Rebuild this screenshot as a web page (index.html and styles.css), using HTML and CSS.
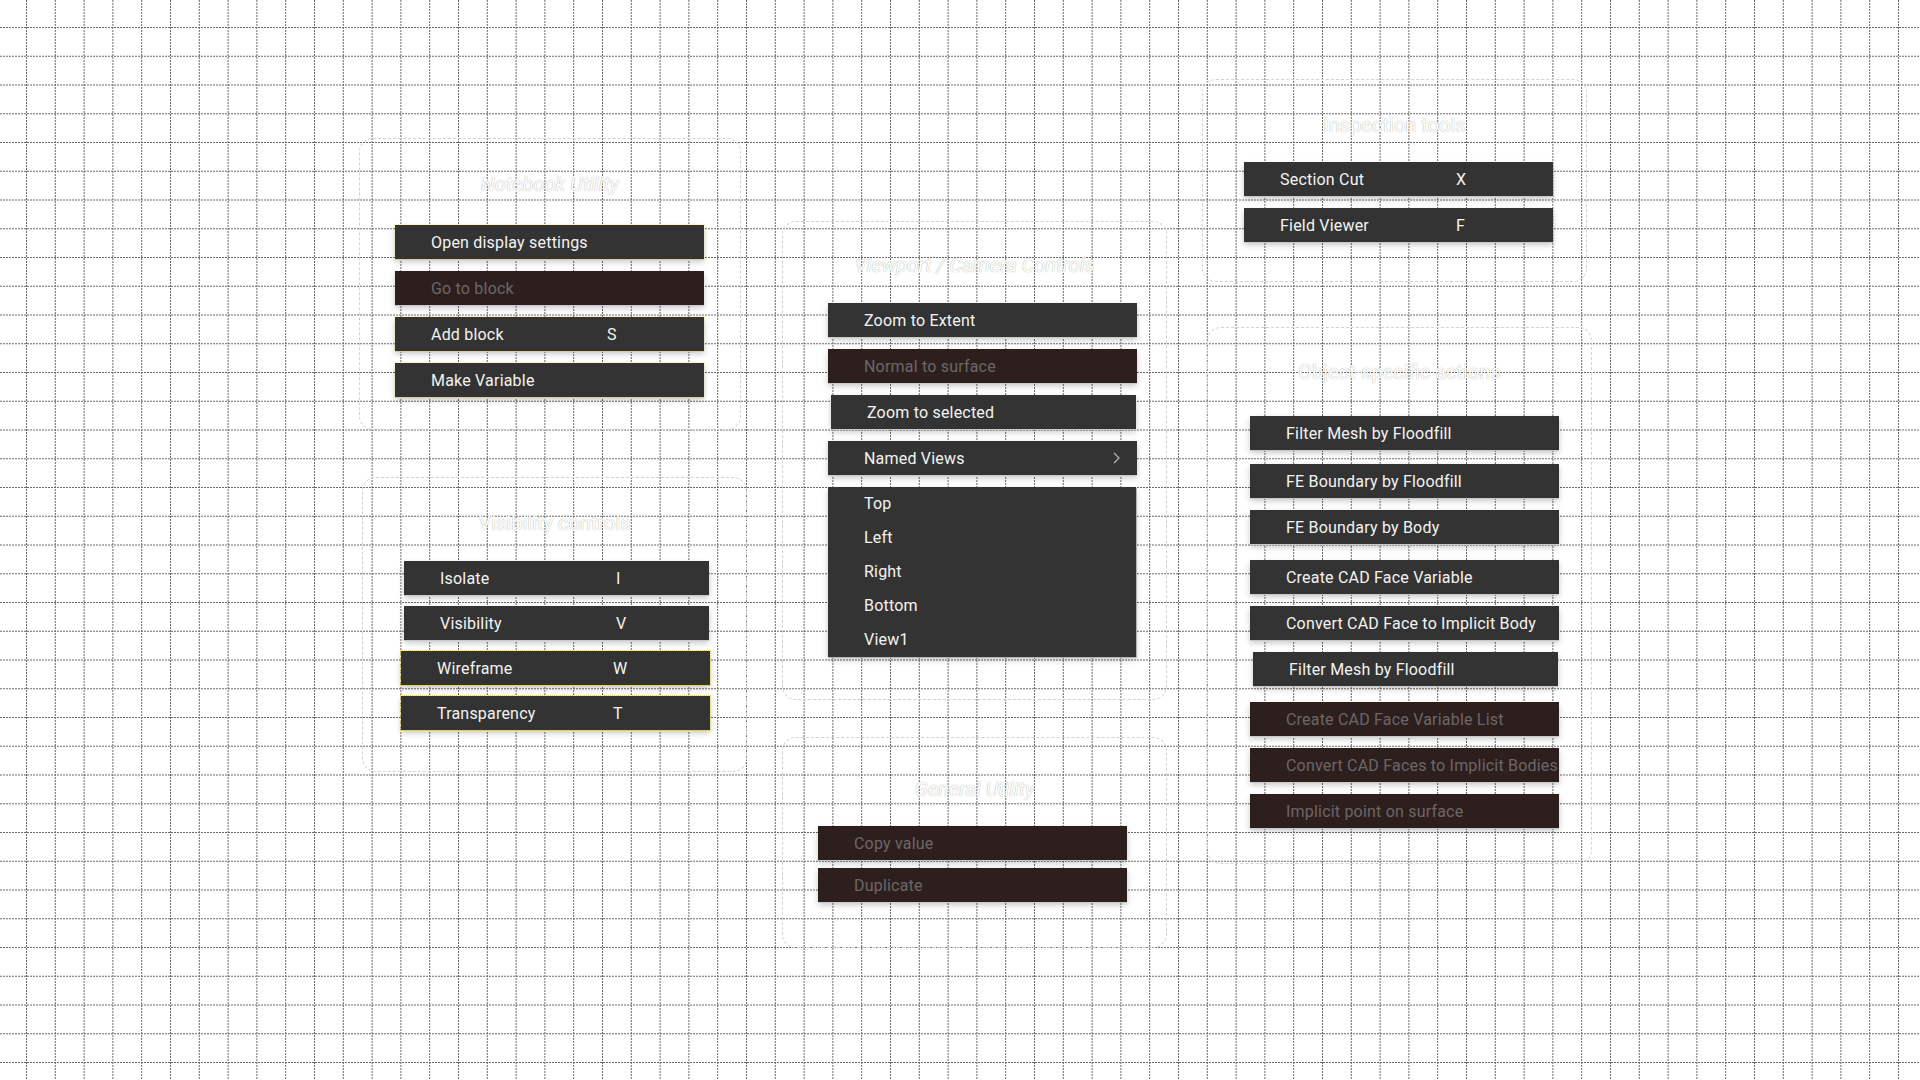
FILE: index.html
```html
<!DOCTYPE html>
<html lang="en">
<head>
    <meta charset="UTF-8">
    <meta name="viewport" content="width=device-width, initial-scale=1.0">
    <title>Context Menus</title>
    <link rel="stylesheet" href="styles.css">
</head>
<body>
    <div class="canvas">
        <!-- board grid -->
        <svg class="grid" width="1920" height="1080" viewBox="0 0 1920 1080">
            <path class="grid-lines" d="M26.5 0V1080M55.3 0V1080M84.1 0V1080M112.9 0V1080M141.7 0V1080M170.5 0V1080M199.3 0V1080M228.1 0V1080M256.9 0V1080M285.7 0V1080M314.5 0V1080M343.3 0V1080M372.1 0V1080M400.9 0V1080M429.7 0V1080M458.5 0V1080M487.3 0V1080M516.1 0V1080M544.9 0V1080M573.7 0V1080M602.5 0V1080M631.3 0V1080M660.1 0V1080M688.9 0V1080M717.7 0V1080M746.5 0V1080M775.3 0V1080M804.1 0V1080M832.9 0V1080M861.7 0V1080M890.5 0V1080M919.3 0V1080M948.1 0V1080M976.9 0V1080M1005.7 0V1080M1034.5 0V1080M1063.3 0V1080M1092.1 0V1080M1120.9 0V1080M1149.7 0V1080M1178.5 0V1080M1207.3 0V1080M1236.1 0V1080M1264.9 0V1080M1293.7 0V1080M1322.5 0V1080M1351.3 0V1080M1380.1 0V1080M1408.9 0V1080M1437.7 0V1080M1466.5 0V1080M1495.3 0V1080M1524.1 0V1080M1552.9 0V1080M1581.7 0V1080M1610.5 0V1080M1639.3 0V1080M1668.1 0V1080M1696.9 0V1080M1725.7 0V1080M1754.5 0V1080M1783.3 0V1080M1812.1 0V1080M1840.9 0V1080M1869.7 0V1080M1898.5 0V1080"/>
            <path class="grid-lines" d="M0 27.5H1920M0 56.25H1920M0 85H1920M0 113.75H1920M0 142.5H1920M0 171.25H1920M0 200H1920M0 228.75H1920M0 257.5H1920M0 286.25H1920M0 315H1920M0 343.75H1920M0 372.5H1920M0 401.25H1920M0 430H1920M0 458.75H1920M0 487.5H1920M0 516.25H1920M0 545H1920M0 573.75H1920M0 602.5H1920M0 631.25H1920M0 660H1920M0 688.75H1920M0 717.5H1920M0 746.25H1920M0 775H1920M0 803.75H1920M0 832.5H1920M0 861.25H1920M0 890H1920M0 918.75H1920M0 947.5H1920M0 976.25H1920M0 1005H1920M0 1033.75H1920M0 1062.5H1920"/>
        </svg>

        <!-- Notebook -->
        <section class="group notebook">
            <h2 class="group-title slanted">Notebook Utility</h2>
            <ul class="menu">
                <li class="item marked">Open display settings</li>
                <li class="item disabled">Go to block</li>
                <li class="item marked"><span class="label">Add block</span><span class="key">S</span></li>
                <li class="item marked">Make Variable</li>
            </ul>
        </section>

        <!-- Visibility -->
        <section class="group visibility">
            <h2 class="group-title">Visibility controls</h2>
            <ul class="menu">
                <li class="item inset"><span class="label">Isolate</span><span class="key">I</span></li>
                <li class="item inset"><span class="label">Visibility</span><span class="key">V</span></li>
                <li class="item selected"><span class="label">Wireframe</span><span class="key">W</span></li>
                <li class="item selected"><span class="label">Transparency</span><span class="key">T</span></li>
            </ul>
        </section>

        <!-- Camera -->
        <section class="group camera">
            <h2 class="group-title slanted">Viewport / Camera Controls</h2>
            <ul class="menu">
                <li class="item">Zoom to Extent</li>
                <li class="item disabled">Normal to surface</li>
                <li class="item inset">Zoom to selected</li>
                <li class="item">
                    <span class="label">Named Views</span>
                    <svg class="chevron" width="7" height="12" viewBox="0 0 7 12"><polyline points="1,1 6,6 1,11" fill="none" stroke="#b8b8b8" stroke-width="1.2"/></svg>
                </li>
                <li class="submenu">
                    <div class="sub-item">Top</div>
                    <div class="sub-item">Left</div>
                    <div class="sub-item">Right</div>
                    <div class="sub-item">Bottom</div>
                    <div class="sub-item">View1</div>
                </li>
            </ul>
        </section>

        <!-- General -->
        <section class="group general">
            <h2 class="group-title slanted">General Utility</h2>
            <ul class="menu">
                <li class="item disabled">Copy value</li>
                <li class="item disabled">Duplicate</li>
            </ul>
        </section>

        <!-- Inspection -->
        <section class="group inspection">
            <h2 class="group-title">Inspection tools</h2>
            <ul class="menu">
                <li class="item"><span class="label">Section Cut</span><span class="key">X</span></li>
                <li class="item"><span class="label">Field Viewer</span><span class="key">F</span></li>
            </ul>
        </section>

        <!-- Object actions -->
        <section class="group objects">
            <h2 class="group-title">Object-specific actions</h2>
            <ul class="menu">
                <li class="item">Filter Mesh by Floodfill</li>
                <li class="item push-sm">FE Boundary by Floodfill</li>
                <li class="item">FE Boundary by Body</li>
                <li class="item push">Create CAD Face Variable</li>
                <li class="item">Convert CAD Face to Implicit Body</li>
                <li class="item inset">Filter Mesh by Floodfill</li>
                <li class="item push disabled">Create CAD Face Variable List</li>
                <li class="item disabled">Convert CAD Faces to Implicit Bodies</li>
                <li class="item disabled">Implicit point on surface</li>
            </ul>
        </section>
    </div>
</body>
</html>
```

FILE: styles.css
```css
body {
    margin: 0;
    padding: 0;
    background-color: #fff;
    font-family: Roboto, "Noto Sans", Arial, sans-serif;
    overflow: hidden;
}
.canvas {
    position: relative;
    width: 1920px;
    height: 1080px;
}

/* dotted board grid */
.grid {
    position: absolute;
    left: 0;
    top: 0;
}
.grid-lines {
    fill: none;
    stroke: #6b6b6b;
    stroke-width: 1;
    stroke-dasharray: 2 1;
}

/* frames on the board */
.group {
    position: absolute;
    box-sizing: border-box;
    width: 385px;
    border: 1px dashed #d2d2d2;
    border-radius: 14px;
}
.group-title {
    margin: 0;
    font-size: 20px;
    font-weight: 400;
    line-height: 24px;
    text-align: center;
    color: #fff;
    text-shadow: 0 0 1px rgba(0, 0, 0, 0.45);
}
.group-title.slanted {
    font-style: italic;
}
.menu {
    list-style: none;
    margin: 0;
    padding: 0;
    display: flex;
    flex-direction: column;
    gap: 12px;
}

.notebook { left: 359px; top: 138px; width: 382px; height: 292px; padding-top: 33px; }
.notebook .menu { margin-top: 29px; padding-left: 35px; }

.visibility { left: 362px; top: 477px; height: 295px; padding-top: 33px; }
.visibility .menu { margin-top: 26px; padding-left: 38px; gap: 11px; }

.camera { left: 782px; top: 221px; height: 479px; padding-top: 31px; }
.camera .menu { margin-top: 26px; padding-left: 45px; }

.general { left: 782px; top: 737px; height: 211px; padding-top: 39px; }
.general .menu { margin-top: 25px; padding-left: 35px; gap: 8px; }

.inspection { left: 1202px; top: 79px; height: 203px; padding-top: 33px; }
.inspection .menu { margin-top: 25px; padding-left: 41px; }

.objects { left: 1207px; top: 327px; height: 537px; padding-top: 32px; }
.objects .menu { margin-top: 32px; padding-left: 42px; }

/* menu rows */
.item {
    box-sizing: border-box;
    display: flex;
    align-items: center;
    width: 309px;
    height: 34px;
    padding: 0 14px 0 36px;
    background-color: #333;
    color: #f3f3f3;
    font-size: 16px;
    letter-spacing: 0.2px;
    white-space: nowrap;
    overflow: hidden;
    box-shadow: 0 1px 0 #c9c9c9, 0 3px 6px rgba(0, 0, 0, 0.22);
}
.item .label {
    width: 176px;
    flex-shrink: 0;
}
.item .key {
    flex-shrink: 0;
}
.item .chevron {
    margin-left: auto;
    margin-right: 3px;
}
.item.disabled {
    background-color: #2e1f1f;
    color: #6d6666;
}
.item.inset {
    width: 305px;
    margin-left: 3px;
}
.item.selected {
    outline: 1px dotted #e4d64b;
}
.item.marked {
    outline: 1px dotted rgba(228, 214, 75, 0.35);
}
.item.push {
    margin-top: 4px;
}
.item.push-sm {
    margin-top: 2px;
}

/* flyout under Named Views */
.submenu {
    box-sizing: border-box;
    width: 308px;
    background-color: #333;
    box-shadow: 1px 1px 0 #b5b5b5, 0 3px 6px rgba(0, 0, 0, 0.22);
}
.sub-item {
    height: 34px;
    line-height: 34px;
    padding-left: 36px;
    color: #f3f3f3;
    font-size: 16px;
    letter-spacing: 0.2px;
}
```
